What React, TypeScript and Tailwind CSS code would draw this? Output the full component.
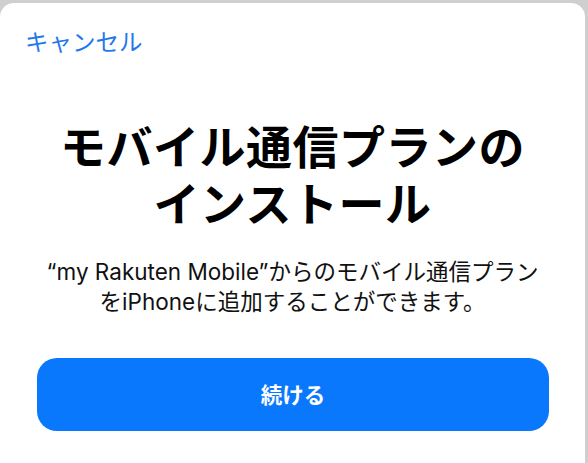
export default function App() {
  return (
    <div className="w-[588px] h-[463px] bg-[#cfcfcf] overflow-hidden pt-[3px] pr-[3px]" style={{ fontFamily: 'Inter, "Noto Sans CJK JP", sans-serif' }}>
      <div className="h-full bg-white rounded-t-[14px] flex flex-col">
        <div className="pl-[25px] pt-[22px] h-[60px]">
          <span className="text-[23.5px] leading-[32px] text-[#1f78ec]" style={{ fontFamily: '"Noto Sans CJK JP", sans-serif' }}>キャンセル</span>
        </div>
        <div className="mt-[53px] text-center text-black font-bold text-[46px] leading-[57px] tracking-[0.5px]" style={{ fontFamily: '"Noto Sans CJK JP", sans-serif' }}>
          <div>モバイル通信プランの</div>
          <div>インストール</div>
        </div>
        <div className="mt-[27px] text-center text-[22.5px] leading-[30px] text-[#111]">
          <div>“my Rakuten Mobile”からのモバイル通信プラン</div>
          <div>をiPhoneに追加することができます。</div>
        </div>
        <div className="mt-[41px] pl-[37px] pr-[36px]">
          <button className="w-full h-[73px] rounded-[20px] bg-[#0a78fd] text-white font-bold text-[21.5px]" style={{ fontFamily: '"Noto Sans CJK JP", sans-serif' }}>続ける</button>
        </div>
      </div>
    </div>
  );
}
